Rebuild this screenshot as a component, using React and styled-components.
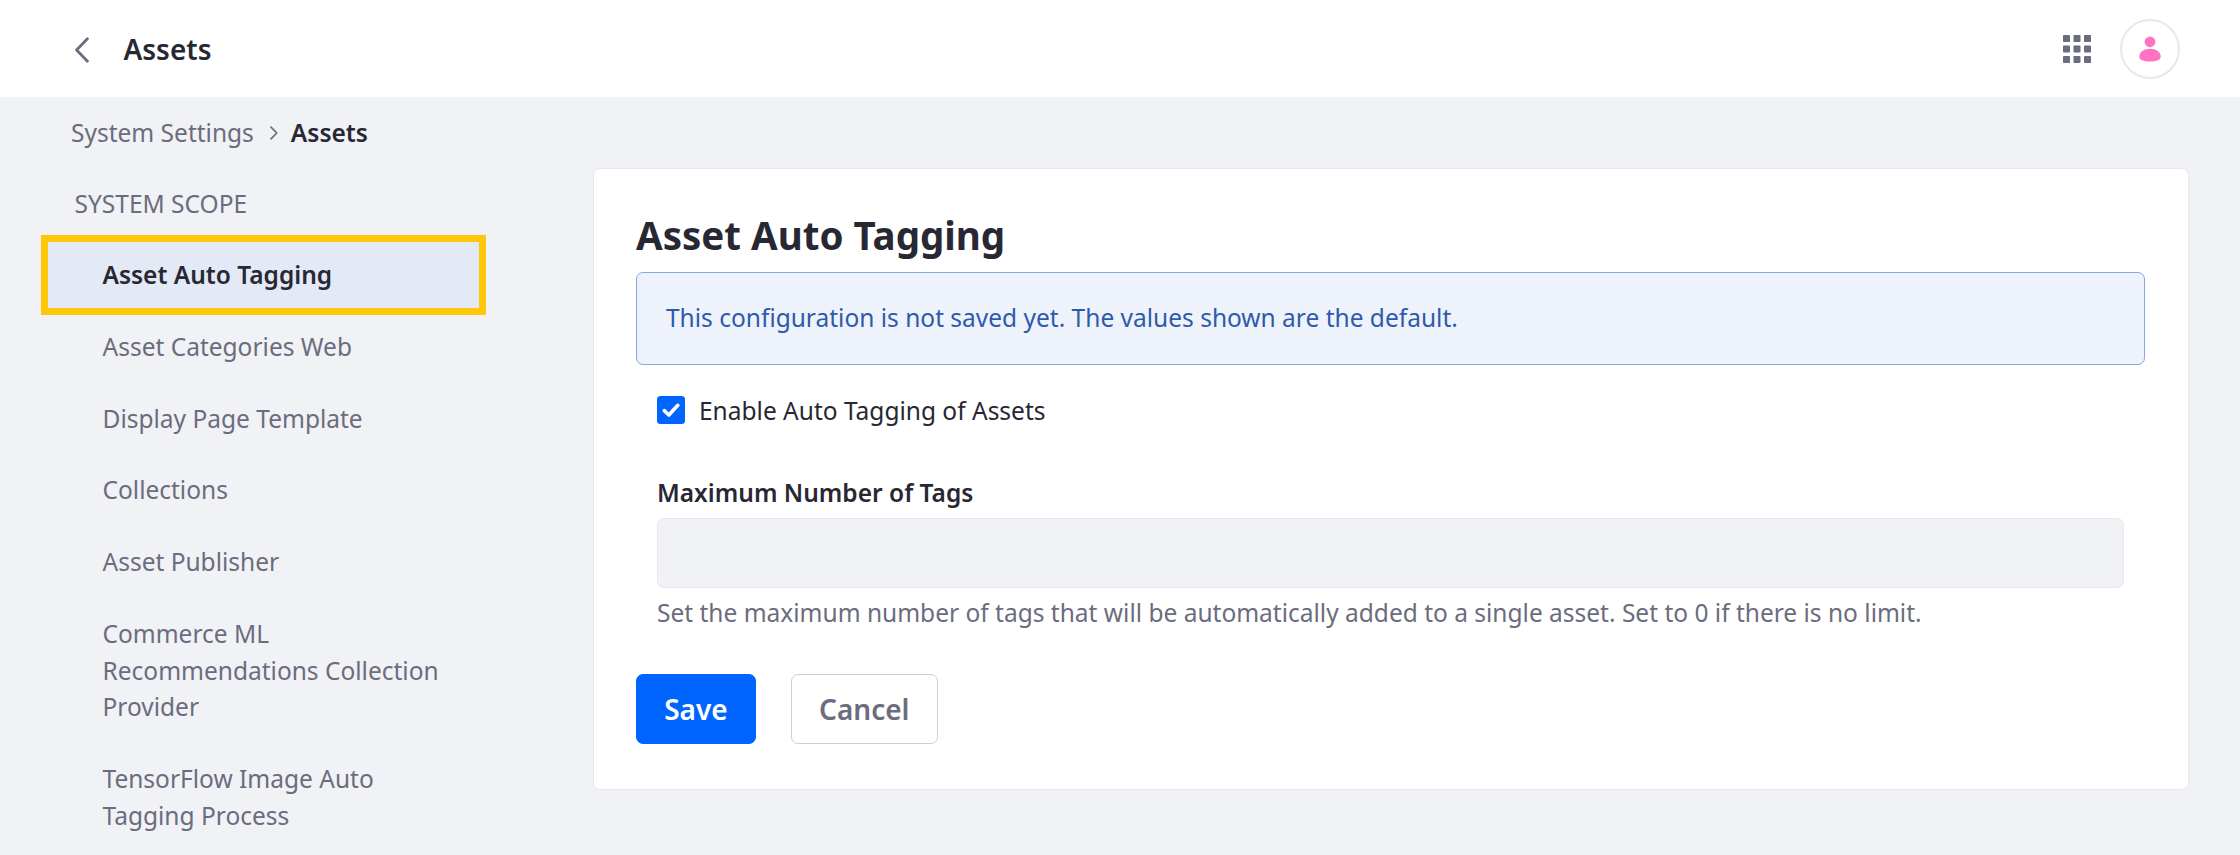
import React from 'react';
import styled, { createGlobalStyle } from 'styled-components';

const GlobalStyle = createGlobalStyle`
  *, *::before, *::after { box-sizing: border-box; }
  body {
    margin: 0;
    background: #f1f2f5;
    color: #272833;
    font-family: "Noto Sans", sans-serif;
    font-size: 24.5px;
    line-height: 36.75px;
  }
`;

const Page = styled.div`
  height: 855px;
  overflow: hidden;
`;

const Header = styled.header`
  display: flex;
  align-items: center;
  height: 97px;
  padding: 0 60px 0 75px;
  background: #fff;
`;

const BackIcon = styled.svg`
  width: 14px;
  height: 26px;
  margin-top: 2px;
`;

const HeaderTitle = styled.h1`
  margin: 0 auto 0 34.5px;
  font-size: 28px;
  font-weight: 600;
  line-height: 42px;
`;

const AppsIcon = styled.svg`
  width: 28px;
  height: 28px;
  margin-top: 1px;
  fill: #6b6c7e;
`;

const Avatar = styled.span`
  display: flex;
  align-items: center;
  justify-content: center;
  width: 60px;
  height: 60px;
  margin: 1px 0 0 29px;
  border: 2px solid #e7e7ed;
  border-radius: 50%;
  color: #ff73c3;
`;

const Breadcrumb = styled.nav`
  display: flex;
  align-items: center;
  height: 36.75px;
  margin-top: 18px;
  padding-left: 71px;
  color: #6b6c7e;
`;

const Separator = styled.svg`
  margin: 0 13px 0 16px;
`;

const Current = styled.span`
  color: #272833;
  font-weight: 600;
`;

const Layout = styled.div`
  display: flex;
  align-items: flex-start;
  padding: 16.25px 51px 0 46px;
`;

const Sidebar = styled.aside`
  position: relative;
  width: 435px;
  margin-right: 112px;
  padding-top: 17.6px;
`;

const Scope = styled.div`
  padding-left: 28.5px;
  color: #6b6c7e;
  text-transform: uppercase;
`;

const Menu = styled.ul`
  margin: 17.3px 0 0;
  padding: 0;
  list-style: none;
`;

const MenuItem = styled.li`
  padding: 17.5px 30px 17.5px 56.5px;
  color: ${({ $active }) => ($active ? '#272833' : '#6b6c7e')};
  background: ${({ $active }) => ($active ? '#e3e9f5' : 'transparent')};
  font-weight: ${({ $active }) => ($active ? 600 : 400)};
`;

const Highlight = styled.div`
  position: absolute;
  top: 66.5px;
  left: -5px;
  width: 445px;
  height: 80.5px;
  border: 7px solid #ffc709;
`;

const Card = styled.main`
  flex: 1;
  height: 622px;
  padding: 42px 43px 42px 42px;
  border: 1px solid #e7e7ed;
  border-radius: 7px;
  background: #fff;
`;

const CardTitle = styled.h2`
  margin: 0;
  font-size: 38.5px;
  font-weight: 700;
  line-height: 48px;
`;

const Alert = styled.div`
  margin-top: 13px;
  padding: 27px 29px;
  border: 1px solid #89a7e0;
  border-radius: 7px;
  background: #eef2fa;
  color: #2e5aac;
`;

const Fields = styled.div`
  padding: 28.4px 21px 0;
`;

const CheckRow = styled.label`
  display: flex;
  align-items: center;
  gap: 14px;
`;

const CheckBox = styled.span`
  display: flex;
  width: 28px;
  height: 28px;
  margin-top: -2.4px;
  border-radius: 3.5px;
  background: #0065ff;
`;

const FieldLabel = styled.label`
  display: block;
  margin-top: 44.8px;
  font-weight: 600;
`;

const Input = styled.input`
  display: block;
  width: 100%;
  height: 70px;
  margin-top: 6.3px;
  border: 1px solid #e7e7ed;
  border-radius: 7px;
  background: #f1f2f5;
`;

const Help = styled.p`
  margin: 7px 0 0;
  color: #6b6c7e;
`;

const Actions = styled.div`
  display: flex;
  gap: 35px;
  margin-top: 43px;
`;

const Button = styled.button`
  height: 70px;
  padding: 0 27.2px;
  border: 1px solid ${({ $primary }) => ($primary ? '#0065ff' : '#cdced9')};
  border-radius: 7px;
  background: ${({ $primary }) => ($primary ? '#0065ff' : '#fff')};
  color: ${({ $primary }) => ($primary ? '#fff' : '#6b6c7e')};
  font-family: inherit;
  font-size: 28px;
  font-weight: 600;
  line-height: 42px;
`;

const items = [
  'Asset Auto Tagging',
  'Asset Categories Web',
  'Display Page Template',
  'Collections',
  'Asset Publisher',
  'Commerce ML Recommendations Collection Provider',
  'TensorFlow Image Auto Tagging Process',
];

const cells = [0, 10.5, 21];

export default function App() {
  return (
    <Page>
      <GlobalStyle />
      <Header>
        <BackIcon viewBox="0 0 14 26" fill="none" stroke="#6b6c7e" strokeWidth="2.8" strokeLinecap="round" strokeLinejoin="round">
          <path d="M12.4 1.8 1.6 13l10.8 11.2" />
        </BackIcon>
        <HeaderTitle>Assets</HeaderTitle>
        <AppsIcon viewBox="0 0 28 28">
          {cells.map((y) => cells.map((x) => <rect key={`${x}-${y}`} x={x} y={y} width="7" height="7" rx="0.8" />))}
        </AppsIcon>
        <Avatar>
          <svg width="22" height="26" viewBox="0 0 22 26" fill="currentColor">
            <circle cx="11" cy="5.8" r="5.4" />
            <path d="M11 12.8c6 0 10.7 3.4 10.7 7.6 0 3.6-4.2 5-10.700 5S.3 24 .3 20.400C.3 16.200 5 12.800 11 12.800Z" />
          </svg>
        </Avatar>
      </Header>
      <Breadcrumb>
        <span>System Settings</span>
        <Separator width="8" height="14" viewBox="0 0 8 14" fill="none" stroke="#6b6c7e" strokeWidth="1.7" strokeLinecap="round" strokeLinejoin="round">
          <path d="m1 1.200 5.800 5.800L1 12.800" />
        </Separator>
        <Current>Assets</Current>
      </Breadcrumb>
      <Layout>
        <Sidebar>
          <Scope>System Scope</Scope>
          <Menu>
            {items.map((item, i) => (
              <MenuItem key={item} $active={i === 0}>{item}</MenuItem>
            ))}
          </Menu>
          <Highlight />
        </Sidebar>
        <Card>
          <CardTitle>Asset Auto Tagging</CardTitle>
          <Alert>This configuration is not saved yet. The values shown are the default.</Alert>
          <Fields>
            <CheckRow>
              <CheckBox>
                <svg width="28" height="28" viewBox="0 0 28 28" fill="none" stroke="#fff" strokeWidth="3.6" strokeLinecap="round" strokeLinejoin="round">
                  <path d="m7.300 14.600 4.600 4.400 8.900-9.700" />
                </svg>
              </CheckBox>
              Enable Auto Tagging of Assets
            </CheckRow>
            <FieldLabel htmlFor="max-tags">Maximum Number of Tags</FieldLabel>
            <Input id="max-tags" disabled />
            <Help>Set the maximum number of tags that will be automatically added to a single asset. Set to 0 if there is no limit.</Help>
          </Fields>
          <Actions>
            <Button $primary>Save</Button>
            <Button>Cancel</Button>
          </Actions>
        </Card>
      </Layout>
    </Page>
  );
}
